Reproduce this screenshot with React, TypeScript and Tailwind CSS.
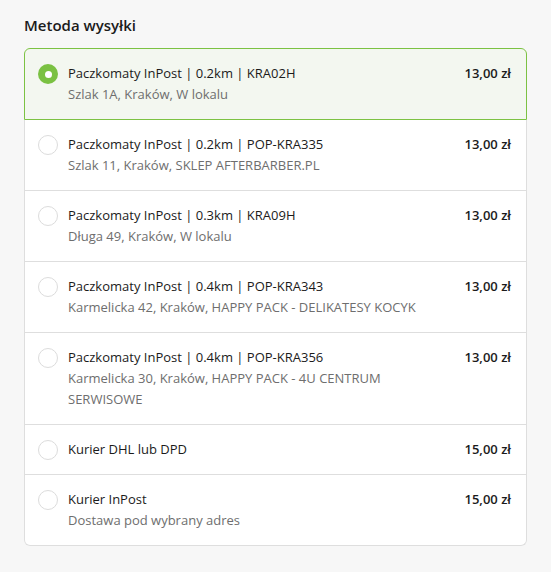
import { useState } from "react"

interface ShippingOption {
  id: string
  title: string
  subtitle?: string
  price: string
}

const OPTIONS: ShippingOption[] = [
  { id: "KRA02H", title: "Paczkomaty InPost | 0.2km | KRA02H", subtitle: "Szlak 1A, Kraków, W lokalu", price: "13,00 zł" },
  { id: "POP-KRA335", title: "Paczkomaty InPost | 0.2km | POP-KRA335", subtitle: "Szlak 11, Kraków, SKLEP AFTERBARBER.PL", price: "13,00 zł" },
  { id: "KRA09H", title: "Paczkomaty InPost | 0.3km | KRA09H", subtitle: "Długa 49, Kraków, W lokalu", price: "13,00 zł" },
  { id: "POP-KRA343", title: "Paczkomaty InPost | 0.4km | POP-KRA343", subtitle: "Karmelicka 42, Kraków, HAPPY PACK - DELIKATESY KOCYK", price: "13,00 zł" },
  { id: "POP-KRA356", title: "Paczkomaty InPost | 0.4km | POP-KRA356", subtitle: "Karmelicka 30, Kraków, HAPPY PACK - 4U CENTRUM SERWISOWE", price: "13,00 zł" },
  { id: "dhl", title: "Kurier DHL lub DPD", price: "15,00 zł" },
  { id: "inpost", title: "Kurier InPost", subtitle: "Dostawa pod wybrany adres", price: "15,00 zł" },
]

export default function App() {
  const [selected, setSelected] = useState("KRA02H")

  return (
    <div className="min-h-screen bg-[#f7f7f7] px-6 pt-[14px] pb-6 font-['Open_Sans',sans-serif] text-[#1b1b1b]">
      <h2 className="mb-3 text-[15px] font-semibold leading-[22px]">Metoda wysyłki</h2>

      <div className="w-[503px] rounded-md bg-white">
        {OPTIONS.map((opt, index) => {
          const isActive = opt.id === selected
          const isFirst = index === 0
          const isLast = index === OPTIONS.length - 1
          return (
            <label
              key={opt.id}
              onClick={() => setSelected(opt.id)}
              className={
                "flex cursor-pointer items-start gap-[10px] border-x border-b py-[14px] pl-[13px] pr-[15px] " +
                (isFirst ? "rounded-t-md border-t " : "") +
                (isLast ? "rounded-b-md " : "") +
                (isActive ? "border-[#7cc243] bg-[#f3f7f0]" : "border-[#dedede]")
              }
            >
              {/* Радио-кнопка */}
              <span
                className={
                  "mt-[1px] flex h-5 w-5 shrink-0 items-center justify-center rounded-full " +
                  (isActive ? "bg-[#7ac142]" : "border border-[#dcdcdc] bg-white")
                }
              >
                {isActive && <span className="h-[7px] w-[7px] rounded-full bg-white" />}
              </span>

              <div className="min-w-0 flex-1 pr-2 text-[13px] leading-[21px]">
                <p>{opt.title}</p>
                {opt.subtitle && <p className="text-[#6e6e6e]">{opt.subtitle}</p>}
              </div>

              <span className="shrink-0 text-[13px] font-semibold leading-[21px]">{opt.price}</span>
            </label>
          )
        })}
      </div>
    </div>
  )
}
